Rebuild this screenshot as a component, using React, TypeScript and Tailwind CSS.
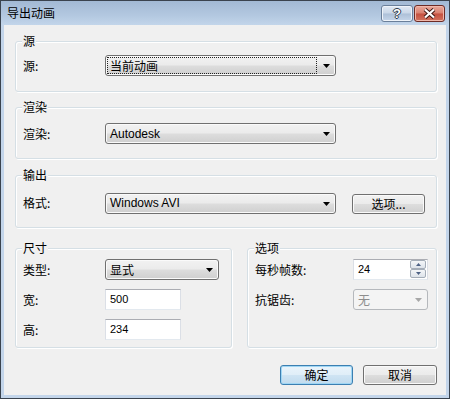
import React from 'react'

const cjk = "font-['Noto_Sans_CJK_SC',sans-serif]"
const latin = "font-['Liberation_Sans','Noto_Sans_CJK_SC',sans-serif]"

const Arrow = ({ color = '#000' }: { color?: string }) => (
  <svg width="7" height="4" viewBox="0 0 7 4" className="absolute right-[5px] top-[8px]">
    <polygon points="0,0 7,0 3.5,4" fill={color} />
  </svg>
)

// Win7 style dropdown list
const Combo = ({ text, width, focus, latinText }: { text: string; width: string; focus?: boolean; latinText?: boolean }) => (
  <div
    className={`relative h-[21px] ${width} rounded-[3px] border border-[#707070] bg-[linear-gradient(#f2f2f2,#ebebeb_48%,#dddddd_52%,#cfcfcf)] shadow-[inset_0_0_0_1px_#fafafa] flex items-center pl-[4px] text-[12px] text-black ${latinText ? "font-['Liberation_Sans',sans-serif] text-[11px]" : cjk}`}
  >
    {focus && <div className="absolute left-[1px] top-[1px] bottom-[1px] right-[18px] border border-dotted border-[#222]" />}
    <span className="leading-[14px]">{text}</span>
    <Arrow />
  </div>
)

const TextBox = ({ value }: { value: string }) => (
  <div className="h-[21px] w-[76px] bg-white border border-t-[#abadb3] border-l-[#dbdfe6] border-r-[#dbdfe6] border-b-[#e3e9ef] flex items-center pl-[4px] text-[11px] font-['Liberation_Sans',sans-serif] text-black">
    {value}
  </div>
)

const Group = ({ label, className, children }: { label: string; className: string; children: React.ReactNode }) => (
  <div className={`relative border border-[#d5dfe5] rounded-[3px] shadow-[inset_1px_1px_0_#fff,1px_1px_0_#fff] ${className}`}>
    <span className={`absolute -top-[8px] left-[6px] px-[1px] bg-[#f0f0f0] text-[12px] leading-[14px] text-black ${cjk}`}>{label}</span>
    {children}
  </div>
)

const Label = ({ text, width }: { text: string; width: string }) => (
  <span className={`${width} text-[12px] leading-[14px] text-black ${cjk}`}>{text}</span>
)

const PushButton = ({ text, width, def }: { text: string; width: string; def?: boolean }) => (
  <button
    className={`h-[20px] ${width} rounded-[3px] border text-[12px] leading-[14px] text-black ${cjk} ${
      def
        ? 'border-[#3c7fb1] bg-[linear-gradient(#eaf4fb,#e0eef8_48%,#cfe4f3_52%,#c1dbee)] shadow-[inset_0_0_0_1px_#9fd6f4]'
        : 'border-[#707070] bg-[linear-gradient(#f2f2f2,#ebebeb_48%,#dddddd_52%,#cfcfcf)] shadow-[inset_0_0_0_1px_#fafafa]'
    }`}
  >
    {text}
  </button>
)

const App: React.FC = () => {
  return (
    <div className="w-[450px] h-[399px] border border-[#3a434e] bg-[#c3d5ea] flex flex-col overflow-hidden">
      {/* Title bar */}
      <div className="h-[24px] flex items-start bg-[linear-gradient(#a2b9d4,#b3c8e0_60%,#c2d5ea)] pl-[6px] pr-[4px]">
        <span className={`mt-[5px] text-[12px] leading-[14px] text-black ${cjk}`}>导出动画</span>
        <div className="ml-auto mt-[4px] flex gap-[1px]">
          <div className="w-[32px] h-[17px] rounded-[3px] border border-[#6a7f9a] bg-[linear-gradient(#e1e9f3,#c9d7e8_48%,#adc0d8_52%,#c6d6ea)] shadow-[inset_0_0_0_1px_#eef3f9] flex items-center justify-center">
            <span className="text-[13px] leading-[13px] font-bold text-white font-['Liberation_Sans',sans-serif] [text-shadow:1px_0_0_#2f3b4a,-1px_0_0_#2f3b4a,0_1px_0_#2f3b4a,0_-1px_0_#2f3b4a]">?</span>
          </div>
          <div className="w-[31px] h-[17px] rounded-[3px] border border-[#6d2b25] bg-[linear-gradient(#e9a99b,#d9806f_48%,#c4503f_52%,#d2735f)] shadow-[inset_0_0_0_1px_#f0b8ab] flex items-center justify-center">
            <svg width="13" height="11" viewBox="0 0 13 11">
              <path d="M2 1.5 L6.5 5.5 L11 1.5 M2 9.5 L6.5 5.5 L11 9.5" stroke="#3a1410" strokeWidth="4" fill="none" />
              <path d="M2 1.5 L6.5 5.5 L11 1.5 M2 9.5 L6.5 5.5 L11 9.5" stroke="#ffffff" strokeWidth="2.2" fill="none" />
            </svg>
          </div>
        </div>
      </div>

      {/* Client area */}
      <div className="mx-[3px] mb-[3px] flex-1 bg-[#f0f0f0] pl-[11px] pr-[9px] pt-[16px]">
        <Group label="源" className="h-[51px] pt-[13px]">
          <div className="flex items-center pl-[7px]">
            <Label text="源:" width="w-[82px]" />
            <Combo text="当前动画" width="w-[231px]" focus />
          </div>
        </Group>

        <Group label="渲染" className="mt-[15px] h-[52px] pt-[15px]">
          <div className="flex items-center pl-[7px]">
            <Label text="渲染:" width="w-[82px]" />
            <Combo text="Autodesk" width="w-[231px]" latinText />
          </div>
        </Group>

        <Group label="输出" className="mt-[16px] h-[53px] pt-[15px]">
          <div className="flex items-center pl-[7px]">
            <Label text="格式:" width="w-[82px]" />
            <Combo text="Windows AVI" width="w-[231px]" latinText />
            <div className="ml-[16px]">
              <PushButton text="选项..." width="w-[73px]" />
            </div>
          </div>
        </Group>

        <div className="mt-[20px] flex gap-[15px]">
          <Group label="尺寸" className="w-[217px] h-[100px] pt-[10px]">
            <div className="flex flex-col gap-[9px] pl-[7px]">
              <div className="flex items-center h-[21px]">
                <Label text="类型:" width="w-[82px]" />
                <Combo text="显式" width="w-[114px]" />
              </div>
              <div className="flex items-center h-[21px]">
                <Label text="宽:" width="w-[82px]" />
                <TextBox value="500" />
              </div>
              <div className="flex items-center h-[21px]">
                <Label text="高:" width="w-[82px]" />
                <TextBox value="234" />
              </div>
            </div>
          </Group>

          <Group label="选项" className="w-[190px] h-[100px] pt-[10px]">
            <div className="flex flex-col gap-[9px] pl-[7px]">
              <div className="flex items-center h-[21px]">
                <Label text="每秒帧数:" width="w-[98px]" />
                <div className="relative h-[21px] w-[75px] bg-white border border-t-[#abadb3] border-l-[#dbdfe6] border-r-[#dbdfe6] border-b-[#e3e9ef] flex items-center pl-[4px] text-[11px] font-['Liberation_Sans',sans-serif] text-black">
                  24
                  <div className="absolute right-[1px] top-[0px] flex flex-col">
                    <div className="w-[16px] h-[9px] border border-[#a4adb8] rounded-[2px] bg-[linear-gradient(#f4f6f8,#dde3ea)] flex items-center justify-center">
                      <svg width="5" height="3" viewBox="0 0 5 3"><polygon points="0,3 5,3 2.5,0" fill="#4d6185" /></svg>
                    </div>
                    <div className="w-[16px] h-[9px] border border-[#a4adb8] rounded-[2px] bg-[linear-gradient(#f4f6f8,#dde3ea)] flex items-center justify-center">
                      <svg width="5" height="3" viewBox="0 0 5 3"><polygon points="0,0 5,0 2.5,3" fill="#4d6185" /></svg>
                    </div>
                  </div>
                </div>
              </div>
              <div className="flex items-center h-[21px]">
                <Label text="抗锯齿:" width="w-[98px]" />
                <div className={`relative h-[21px] w-[75px] rounded-[3px] border border-[#b5b8bc] bg-[#f4f4f4] flex items-center pl-[4px] text-[12px] text-[#8d8d8d] ${cjk}`}>
                  <span className="leading-[14px]">无</span>
                  <Arrow color="#a7a7a7" />
                </div>
              </div>
            </div>
          </Group>
        </div>

        <div className="mt-[17px] flex justify-end gap-[10px]">
          <PushButton text="确定" width="w-[73px]" def />
          <PushButton text="取消" width="w-[74px]" />
        </div>
      </div>
    </div>
  )
}

export default App
